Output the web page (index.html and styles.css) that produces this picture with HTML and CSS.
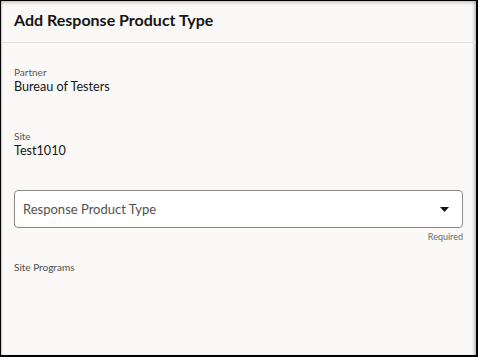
FILE: index.html
```html
<!DOCTYPE html>
<html>
<head>
<meta charset="utf-8">
<link rel="stylesheet" href="styles.css">
</head>
<body>
<div class="dialog">
  <div class="header">
    <h1 class="title">Add Response Product Type</h1>
  </div>
  <div class="body">
    <div class="field">
      <div class="label">Partner</div>
      <div class="value">Bureau of Testers</div>
    </div>
    <div class="field">
      <div class="label">Site</div>
      <div class="value">Test1010</div>
    </div>
    <div class="select-wrap">
      <div class="select">
        <span class="placeholder">Response Product Type</span>
        <svg class="caret" width="9" height="5" viewBox="0 0 9 5"><path d="M0 0H9L4.5 5Z" fill="#161513"/></svg>
      </div>
      <div class="required">Required</div>
    </div>
    <div class="section-label">Site Programs</div>
  </div>
</div>
</body>
</html>
```
FILE: styles.css
```css
html, body {
  margin: 0;
  padding: 0;
  background: #000;
  height: 357px;
  overflow: hidden;
}
body {
  padding: 1px 2px 2px 1px;
  box-sizing: border-box;
  font-family: Lato, "Noto Sans", sans-serif;
  color: #161513;
}
.dialog {
  height: 354px;
  background: #faf9f8;
  box-shadow: inset 0 3px 4px -2px rgba(0,0,0,0.25), inset 2px 0 2px -1px rgba(0,0,0,0.15), inset -3px 0 3px -1px rgba(0,0,0,0.2);
}
.header {
  height: 41px;
  border-bottom: 1px solid #e2e0dd;
  padding: 0 13px;
  display: flex;
  align-items: center;
}
.title {
  margin: 0;
  font-size: 16px;
  font-weight: 700;
  line-height: 20px;
  padding-bottom: 4px;
}
.body {
  padding: 23px 13px 0 13px;
}
.field {
  margin-bottom: 35px;
}
.field + .field {
  margin-bottom: 31px;
}
.label {
  font-size: 10px;
  line-height: 12px;
  color: #5b5752;
}
.value {
  font-size: 12.6px;
  line-height: 17px;
}
.select {
  height: 36px;
  background: #fff;
  border: 1px solid #8d8a86;
  border-radius: 4px;
  display: flex;
  align-items: center;
  justify-content: space-between;
  padding: 0 13px 0 8px;
}
.placeholder {
  font-size: 13px;
  color: #54504b;
}
.caret {
  display: block;
}
.required {
  text-align: right;
  font-size: 9px;
  line-height: 17px;
  color: #6f6b66;
}
.section-label {
  margin-top: 16px;
  font-size: 10px;
  line-height: 12px;
  color: #4f4b46;
}
```
